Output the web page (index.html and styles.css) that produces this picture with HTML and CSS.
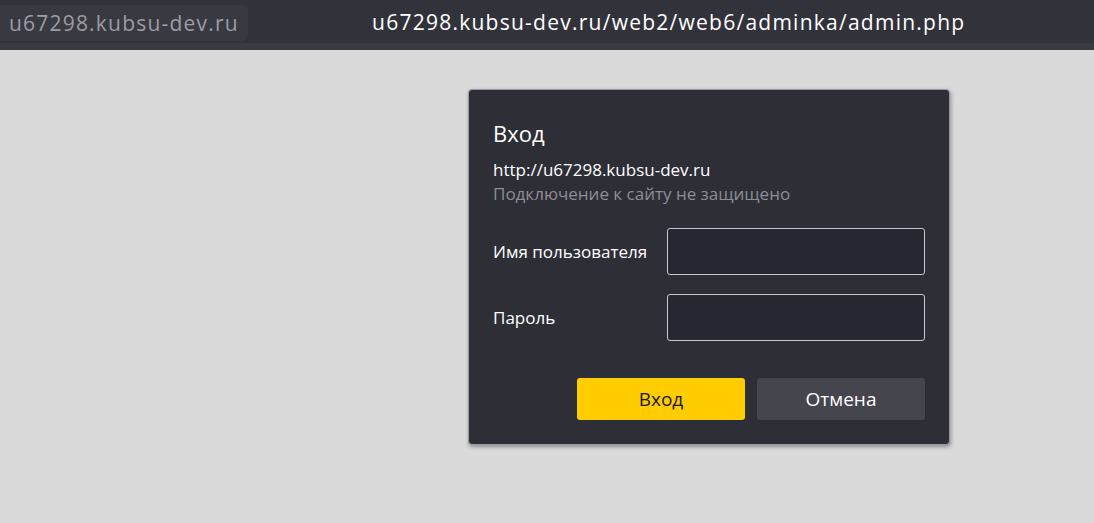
FILE: index.html
```html
<!DOCTYPE html>
<html lang="ru">
<head>
<meta charset="utf-8">
<link rel="stylesheet" href="styles.css">
</head>
<body>
<header class="topbar">
  <div class="host-pill">u67298.kubsu-dev.ru</div>
  <div class="url">u67298.kubsu-dev.ru/web2/web6/adminka/admin.php</div>
</header>
<div class="strip"></div>
<main class="page">
  <div class="dialog">
    <h1 class="title">Вход</h1>
    <div class="origin">http://u67298.kubsu-dev.ru</div>
    <div class="warning">Подключение к сайту не защищено</div>
    <div class="fields">
      <label class="row">
        <span class="label">Имя пользователя</span>
        <input class="input" type="text">
      </label>
      <label class="row">
        <span class="label">Пароль</span>
        <input class="input" type="password">
      </label>
    </div>
    <div class="actions">
      <button class="btn btn-primary">Вход</button>
      <button class="btn btn-secondary">Отмена</button>
    </div>
  </div>
</main>
</body>
</html>
```
FILE: styles.css
```css
* { box-sizing: border-box; }
html, body { margin: 0; padding: 0; }
body {
  background: #dadada;
  font-family: "Open Sans", "Noto Sans", sans-serif;
  height: 523px;
  overflow: hidden;
}
.topbar {
  height: 43px;
  background: #32323b;
  display: flex;
  align-items: center;
}
.host-pill {
  width: 248px;
  height: 36px;
  margin-top: 2px;
  background: #393942;
  border-radius: 0 6px 6px 0;
  color: #9c9ca3;
  font-size: 21px;
  letter-spacing: 1.2px;
  line-height: 36px;
  padding-left: 9px;
  white-space: nowrap;
}
.url {
  margin-left: 124px;
  color: #ffffff;
  font-size: 21px;
  letter-spacing: 1.25px;
  white-space: nowrap;
}
.strip {
  height: 7px;
  background: #3a3a42;
}
.page {
  padding-top: 39px;
  padding-left: 468px;
}
.dialog {
  width: 482px;
  height: 356px;
  background: #2e2e37;
  border: 1px solid #9a9a9e;
  border-radius: 4px;
  box-shadow: 1px 2px 4px rgba(0,0,0,0.35);
  padding: 29px 24px 0 24px;
  color: #ffffff;
}
.title {
  margin: 0;
  font-size: 22px;
  font-weight: 400;
  line-height: 28px;
}
.origin {
  margin-top: 11px;
  font-size: 17px;
  line-height: 24px;
}
.warning {
  font-size: 17px;
  line-height: 24px;
  color: #8d8d93;
}
.fields {
  margin-top: 22px;
  display: flex;
  flex-direction: column;
  gap: 19px;
}
.row {
  display: flex;
  align-items: center;
}
.label {
  width: 174px;
  font-size: 17px;
}
.input {
  width: 258px;
  height: 47px;
  background: #262730;
  border: 1px solid #c8c8cc;
  border-radius: 3px;
  color: #fff;
  outline: none;
}
.actions {
  margin-top: 37px;
  display: flex;
  justify-content: flex-end;
  gap: 12px;
}
.btn {
  width: 168px;
  height: 42px;
  border: none;
  border-radius: 3px;
  font-family: "Open Sans", "Noto Sans", sans-serif;
  font-size: 19px;
  cursor: pointer;
}
.btn-primary {
  background: #ffcc00;
  color: #1a1a1a;
}
.btn-secondary {
  background: #45454d;
  color: #ffffff;
}
```
